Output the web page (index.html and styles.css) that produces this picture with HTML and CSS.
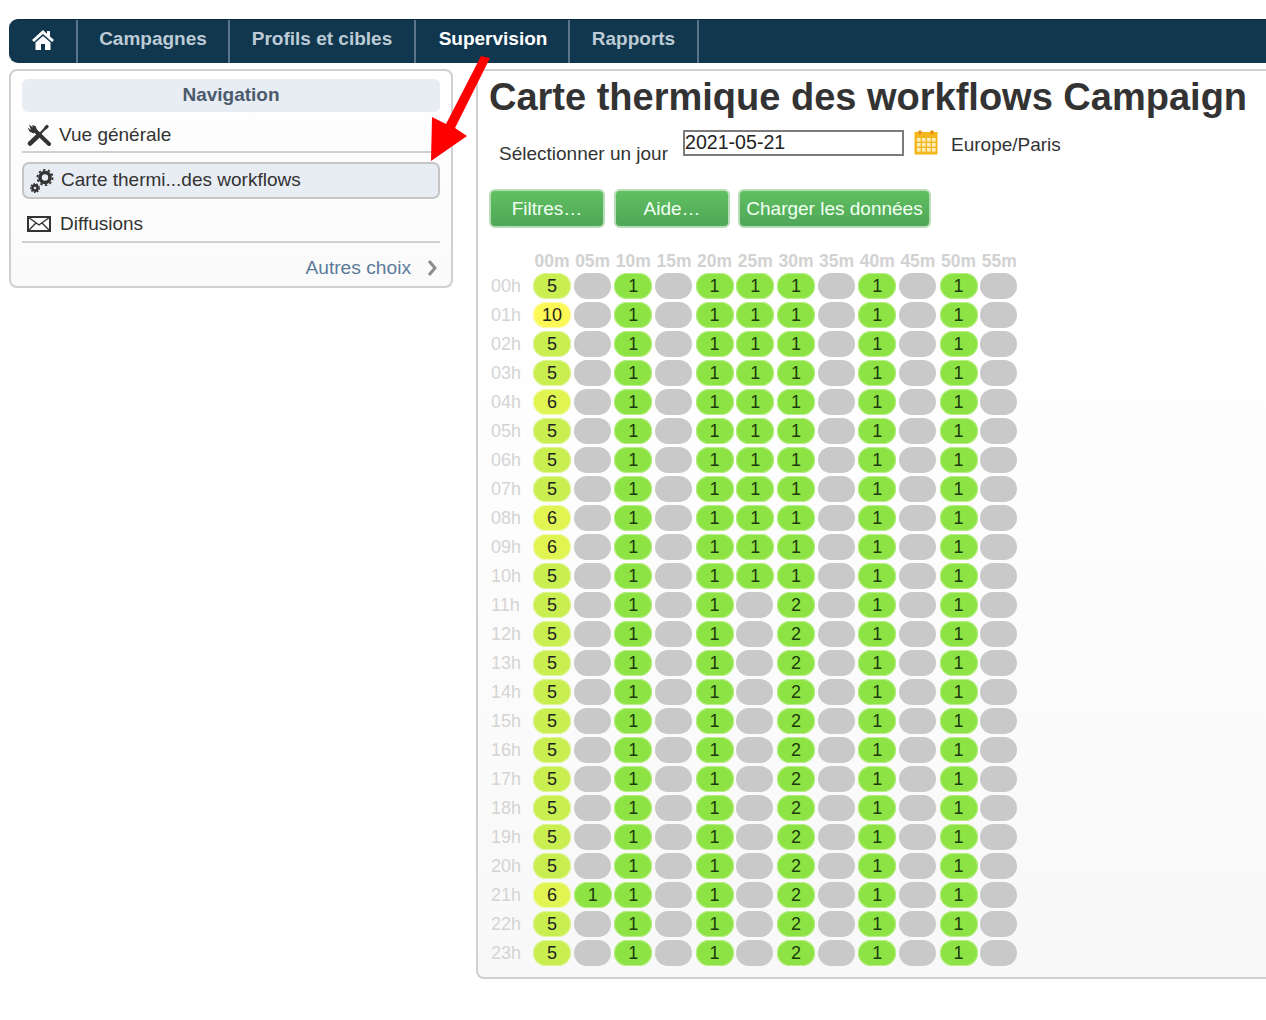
FILE: index.html
```html
<!DOCTYPE html>
<html lang="fr">
<head>
<meta charset="utf-8">
<title>Carte thermique des workflows</title>
<link rel="stylesheet" href="styles.css">
</head>
<body>
<nav class="topbar">
  <a class="tab tab-home"><svg width="24" height="22" viewBox="0 0 24 22"><path d="M12 1 L1 11 L3 13 L12 5 L21 13 L23 11 L19 7.4 V2 H16 V4.7 Z M4.5 13.5 V21 H10 V15 H14 V21 H19.5 V13.5 L12 7 Z" fill="#fff"/></svg></a>
  <a class="tab tab-campagnes">Campagnes</a>
  <a class="tab tab-profils">Profils et cibles</a>
  <a class="tab tab-supervision active">Supervision</a>
  <a class="tab tab-rapports">Rapports</a>
</nav>
<div class="page">
  <aside class="sidebar">
    <h2 class="side-title">Navigation</h2>
    <a class="side-item side-first">
      <svg class="side-icon" width="24" height="22" viewBox="0 0 24 22"><path d="M7 5.5 L22 20" stroke="#333" stroke-width="4" stroke-linecap="round"/><path d="M2 0.5 L6 3.5 L5 1 L8.5 2 L10 6 L6.5 9.5 L2.5 7.5 L0.5 3.5 L4 6 Z" fill="#333"/><path d="M3 19.5 L11 12" stroke="#333" stroke-width="4.5" stroke-linecap="round"/><path d="M11 12 L19 3.5" stroke="#333" stroke-width="2.4"/><path d="M17 3 L20 0.5 L22 2.5 L19.5 5.5 Z" fill="#333"/></svg>
      <span>Vue générale</span>
    </a>
    <a class="side-item side-selected">
      <svg class="side-icon" width="24" height="26" viewBox="0 0 24 26"><g fill="none" stroke="#333"><circle cx="15" cy="9.5" r="5" stroke-width="3.6"/><circle cx="15" cy="9.5" r="7.6" stroke-width="1.8" stroke-dasharray="2.4 2.4"/><circle cx="5" cy="20" r="2.6" stroke-width="2.6"/><circle cx="5" cy="20" r="4.4" stroke-width="1.3" stroke-dasharray="1.6 1.5"/></g></svg>
      <span class="side-label">Carte thermi...des workflows</span>
    </a>
    <a class="side-item side-last">
      <svg class="side-icon" width="24" height="16" viewBox="0 0 24 16"><rect x="1" y="1" width="22" height="14" fill="none" stroke="#333" stroke-width="2"/><path d="M1 1 L12 9 L23 1 M1 15 L9 7 M23 15 L15 7" fill="none" stroke="#333" stroke-width="1.4"/></svg>
      <span>Diffusions</span>
    </a>
    <a class="side-more"><span>Autres choix</span><svg width="10" height="16" viewBox="0 0 10 16"><path d="M2 1 L8 8 L2 15" fill="none" stroke="#8d8d8d" stroke-width="3"/></svg></a>
  </aside>
  <main class="content">
    <h1 class="title">Carte thermique des workflows Campaign</h1>
    <div class="day-row">
      <label class="day-label" for="day">Sélectionner un jour</label>
      <input class="day-input" id="day" type="text" value="2021-05-21">
      <svg class="cal" width="24" height="25" viewBox="0 0 24 25"><rect x="0.5" y="2" width="23" height="22.5" fill="#f3b71b"/><path d="M6 0.5 V4 M18 0.5 V4" stroke="#e48a10" stroke-width="3"/><g fill="#fdefbd"><rect x="3" y="8" width="3.6" height="3.6"/><rect x="8" y="8" width="3.6" height="3.6"/><rect x="13" y="8" width="3.6" height="3.6"/><rect x="18" y="8" width="3.6" height="3.6"/><rect x="3" y="13" width="3.6" height="3.6"/><rect x="8" y="13" width="3.6" height="3.6"/><rect x="13" y="13" width="3.6" height="3.6"/><rect x="18" y="13" width="3.6" height="3.6"/><rect x="3" y="18" width="3.6" height="3.6"/><rect x="8" y="18" width="3.6" height="3.6"/><rect x="13" y="18" width="3.6" height="3.6"/><rect x="18" y="18" width="3.6" height="3.6"/></g></svg>
      <span class="tz">Europe/Paris</span>
    </div>
    <div class="actions">
      <button class="btn btn-a">Filtres…</button>
      <button class="btn btn-a">Aide…</button>
      <button class="btn btn-b">Charger les données</button>
    </div>
    <div class="heat">
      <i></i><b>00m</b><b>05m</b><b>10m</b><b>15m</b><b>20m</b><b>25m</b><b>30m</b><b>35m</b><b>40m</b><b>45m</b><b>50m</b><b>55m</b>
      <u>00h</u><s class="c5">5</s><s></s><s class="c1">1</s><s></s><s class="c1">1</s><s class="c1">1</s><s class="c1">1</s><s></s><s class="c1">1</s><s></s><s class="c1">1</s><s></s>
      <u>01h</u><s class="c10">10</s><s></s><s class="c1">1</s><s></s><s class="c1">1</s><s class="c1">1</s><s class="c1">1</s><s></s><s class="c1">1</s><s></s><s class="c1">1</s><s></s>
      <u>02h</u><s class="c5">5</s><s></s><s class="c1">1</s><s></s><s class="c1">1</s><s class="c1">1</s><s class="c1">1</s><s></s><s class="c1">1</s><s></s><s class="c1">1</s><s></s>
      <u>03h</u><s class="c5">5</s><s></s><s class="c1">1</s><s></s><s class="c1">1</s><s class="c1">1</s><s class="c1">1</s><s></s><s class="c1">1</s><s></s><s class="c1">1</s><s></s>
      <u>04h</u><s class="c6">6</s><s></s><s class="c1">1</s><s></s><s class="c1">1</s><s class="c1">1</s><s class="c1">1</s><s></s><s class="c1">1</s><s></s><s class="c1">1</s><s></s>
      <u>05h</u><s class="c5">5</s><s></s><s class="c1">1</s><s></s><s class="c1">1</s><s class="c1">1</s><s class="c1">1</s><s></s><s class="c1">1</s><s></s><s class="c1">1</s><s></s>
      <u>06h</u><s class="c5">5</s><s></s><s class="c1">1</s><s></s><s class="c1">1</s><s class="c1">1</s><s class="c1">1</s><s></s><s class="c1">1</s><s></s><s class="c1">1</s><s></s>
      <u>07h</u><s class="c5">5</s><s></s><s class="c1">1</s><s></s><s class="c1">1</s><s class="c1">1</s><s class="c1">1</s><s></s><s class="c1">1</s><s></s><s class="c1">1</s><s></s>
      <u>08h</u><s class="c6">6</s><s></s><s class="c1">1</s><s></s><s class="c1">1</s><s class="c1">1</s><s class="c1">1</s><s></s><s class="c1">1</s><s></s><s class="c1">1</s><s></s>
      <u>09h</u><s class="c6">6</s><s></s><s class="c1">1</s><s></s><s class="c1">1</s><s class="c1">1</s><s class="c1">1</s><s></s><s class="c1">1</s><s></s><s class="c1">1</s><s></s>
      <u>10h</u><s class="c5">5</s><s></s><s class="c1">1</s><s></s><s class="c1">1</s><s class="c1">1</s><s class="c1">1</s><s></s><s class="c1">1</s><s></s><s class="c1">1</s><s></s>
      <u>11h</u><s class="c5">5</s><s></s><s class="c1">1</s><s></s><s class="c1">1</s><s></s><s class="c1">2</s><s></s><s class="c1">1</s><s></s><s class="c1">1</s><s></s>
      <u>12h</u><s class="c5">5</s><s></s><s class="c1">1</s><s></s><s class="c1">1</s><s></s><s class="c1">2</s><s></s><s class="c1">1</s><s></s><s class="c1">1</s><s></s>
      <u>13h</u><s class="c5">5</s><s></s><s class="c1">1</s><s></s><s class="c1">1</s><s></s><s class="c1">2</s><s></s><s class="c1">1</s><s></s><s class="c1">1</s><s></s>
      <u>14h</u><s class="c5">5</s><s></s><s class="c1">1</s><s></s><s class="c1">1</s><s></s><s class="c1">2</s><s></s><s class="c1">1</s><s></s><s class="c1">1</s><s></s>
      <u>15h</u><s class="c5">5</s><s></s><s class="c1">1</s><s></s><s class="c1">1</s><s></s><s class="c1">2</s><s></s><s class="c1">1</s><s></s><s class="c1">1</s><s></s>
      <u>16h</u><s class="c5">5</s><s></s><s class="c1">1</s><s></s><s class="c1">1</s><s></s><s class="c1">2</s><s></s><s class="c1">1</s><s></s><s class="c1">1</s><s></s>
      <u>17h</u><s class="c5">5</s><s></s><s class="c1">1</s><s></s><s class="c1">1</s><s></s><s class="c1">2</s><s></s><s class="c1">1</s><s></s><s class="c1">1</s><s></s>
      <u>18h</u><s class="c5">5</s><s></s><s class="c1">1</s><s></s><s class="c1">1</s><s></s><s class="c1">2</s><s></s><s class="c1">1</s><s></s><s class="c1">1</s><s></s>
      <u>19h</u><s class="c5">5</s><s></s><s class="c1">1</s><s></s><s class="c1">1</s><s></s><s class="c1">2</s><s></s><s class="c1">1</s><s></s><s class="c1">1</s><s></s>
      <u>20h</u><s class="c5">5</s><s></s><s class="c1">1</s><s></s><s class="c1">1</s><s></s><s class="c1">2</s><s></s><s class="c1">1</s><s></s><s class="c1">1</s><s></s>
      <u>21h</u><s class="c6">6</s><s class="c1">1</s><s class="c1">1</s><s></s><s class="c1">1</s><s></s><s class="c1">2</s><s></s><s class="c1">1</s><s></s><s class="c1">1</s><s></s>
      <u>22h</u><s class="c5">5</s><s></s><s class="c1">1</s><s></s><s class="c1">1</s><s></s><s class="c1">2</s><s></s><s class="c1">1</s><s></s><s class="c1">1</s><s></s>
      <u>23h</u><s class="c5">5</s><s></s><s class="c1">1</s><s></s><s class="c1">1</s><s></s><s class="c1">2</s><s></s><s class="c1">1</s><s></s><s class="c1">1</s><s></s>
    </div>
  </main>
</div>
<svg class="arrow" width="60" height="110" viewBox="430 55 60 110"><polygon points="481,56 490,58 455,128 467,136 431,161 432,117 446,124" fill="#fe0000"/></svg>
</body>
</html>
```

FILE: styles.css
```css
* { box-sizing: border-box; }
html, body { margin: 0; height: 1020px; overflow: hidden; background: #fff; }
body {
  padding: 19px 0 0 9px;
  font-family: "Liberation Sans", Arial, sans-serif;
  color: #333;
  position: relative;
}
.topbar {
  display: flex;
  height: 44px;
  background: #11374f;
  border-radius: 9px 0 0 9px;
  border-top: 1px solid #0c2c40;
  font-size: 19px;
  font-weight: bold;
}
.tab {
  display: flex;
  align-items: center;
  justify-content: center;
  padding-bottom: 5px;
  color: #bccbd5;
  border-right: 2px solid #5a7587;
}
.tab-home { width: 69px; padding-bottom: 3px; }
.tab-campagnes { width: 152px; }
.tab-profils { width: 186px; }
.tab-supervision { width: 154px; padding-left: 2px; }
.tab-rapports { width: 129px; }
.tab.active { color: #fff; }

.page {
  display: flex;
  align-items: flex-start;
  gap: 23px;
  margin-top: 6px;
}
.sidebar {
  flex: none;
  width: 444px;
  height: 219px;
  padding: 8px 11px 0;
  border: 2px solid #d0d0d0;
  border-radius: 8px;
  background: linear-gradient(#fff, #fafafa);
}
.side-title {
  margin: 0;
  height: 33px;
  line-height: 32px;
  text-align: center;
  font-size: 19px;
  font-weight: bold;
  color: #4b5b6c;
  background: #e8ecf3;
  border-radius: 6px;
}
.side-item {
  display: flex;
  align-items: center;
  font-size: 19px;
  color: #333;
}
.side-icon { flex: none; }
.side-label { margin-bottom: 2px; }
.side-first {
  height: 41px;
  padding: 7px 0 0 5px;
  gap: 8px;
  border-bottom: 2px solid #d0d0d0;
}
.side-selected {
  height: 37px;
  margin-top: 9px;
  padding: 0 0 0 6px;
  gap: 7px;
  background: #e8ecf3;
  border: 2px solid #c5c5c5;
  border-radius: 7px;
}
.side-last {
  height: 36px;
  margin-top: 8px;
  padding: 0 0 0 5px;
  gap: 9px;
  border-bottom: 2px solid #d0d0d0;
}
.side-more {
  display: flex;
  justify-content: flex-end;
  align-items: center;
  gap: 16px;
  height: 49px;
  padding: 0 3px 0 0;
  font-size: 19.2px;
  color: #5c7b9b;
}
.content {
  flex: 1;
  height: 910px;
  padding: 0 0 0 11px;
  border: solid #d0d0d0;
  border-width: 2px 0 2px 2px;
  border-radius: 0 0 0 8px;
  background: linear-gradient(#fff 25%, #f8f8f8);
}
.title {
  margin: 0;
  padding-top: 2px;
  font-size: 38px;
  line-height: 48px;
  font-weight: bold;
  color: #333;
  white-space: nowrap;
}
.day-row {
  display: flex;
  align-items: flex-start;
  height: 68px;
  padding-top: 9px;
}
.day-label {
  margin: 13px 15px 0 10px;
  font-size: 19px;
  line-height: 22px;
  white-space: nowrap;
}
.day-input {
  width: 221px;
  height: 26px;
  padding: 0 0 2px 0;
  border: 2px solid #7b7b7b;
  border-radius: 0;
  background: #fff;
  font: 19.6px "Liberation Sans", Arial, sans-serif;
  color: #222;
}
.cal { margin: 0 0 0 10px; flex: none; }
.tz { margin: 3px 0 0 13px; font-size: 19px; line-height: 24px; }
.actions {
  display: flex;
  gap: 9px;
  height: 39px;
}
.btn {
  height: 39px;
  padding: 0;
  border: 2px solid #b6ddb6;
  border-radius: 6px;
  background: linear-gradient(#60c060, #4fa658);
  color: #f2fff2;
  font: 19px "Liberation Sans", Arial, sans-serif;
}
.btn-a { width: 116px; }
.btn-b { width: 193px; margin-left: -1px; }
.heat {
  display: grid;
  grid-template-columns: 44px repeat(12, 40.67px);
  grid-template-rows: 23px;
  grid-auto-rows: 29px;
  margin-top: 22px;
  font-size: 18px;
}
.heat i { display: block; }
.heat b {
  display: flex;
  justify-content: center;
  width: 38px;
  font-size: 17.5px;
  line-height: 22px;
  font-weight: bold;
  color: #d2d2d2;
  white-space: nowrap;
}
.heat u {
  padding-left: 2px;
  text-decoration: none;
  color: #d4d4d4;
  line-height: 27px;
}
.heat s {
  display: block;
  width: 37px;
  height: 26px;
  border-radius: 13px;
  background: #c9c9c9;
  text-decoration: none;
  text-align: center;
  line-height: 26px;
  color: #222;
}
.heat s.c1 { width: 38px; background: #8de343; box-shadow: inset 0 0 0 1px #b8ee85; color: #1d3a0c; }
.heat s.c5 { width: 38px; background: #c9ee50; box-shadow: inset 0 0 0 1px #dff59a; }
.heat s.c6 { width: 38px; background: #e0f452; box-shadow: inset 0 0 0 1px #eff9ab; }
.heat s.c10 { width: 38px; background: #fcf956; box-shadow: inset 0 0 0 1px #fdfbab; }
.arrow {
  position: absolute;
  left: 430px;
  top: 55px;
}
```
